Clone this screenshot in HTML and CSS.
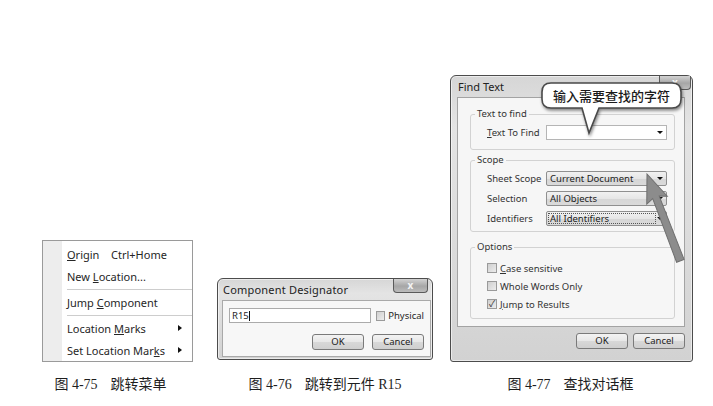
FILE: index.html
```html
<!DOCTYPE html>
<html lang="zh-CN">
<head>
    <meta charset="UTF-8">
    <title>跳转与查找</title>
    <link rel="stylesheet" href="styles.css">
</head>
<body>
    <div class="figures">
        <!-- 图 4-75 -->
        <div class="figure fig-menu">
            <div class="menu">
                <div class="menu-item"><span class="menu-label"><u>O</u>rigin</span><span>Ctrl+Home</span></div>
                <div class="menu-item"><span>New <u>L</u>ocation...</span></div>
                <div class="menu-sep"></div>
                <div class="menu-item"><span>Jump <u>C</u>omponent</span></div>
                <div class="menu-sep"></div>
                <div class="menu-item"><span>Location <u>M</u>arks</span><span class="sub-arrow"></span></div>
                <div class="menu-item"><span>Set Location Mar<u>k</u>s</span><span class="sub-arrow"></span></div>
            </div>
            <p class="caption">图 4-75<span class="gap"></span>跳转菜单</p>
        </div>

        <!-- 图 4-76 -->
        <div class="figure fig-jump">
            <div class="window win-small">
                <div class="titlebar">
                    <span class="title">Component Designator</span>
                    <span class="close-btn">x</span>
                </div>
                <div class="client">
                    <div class="designator-row">
                        <div class="textbox">R15<span class="caret"></span></div>
                        <span class="checkbox"></span>
                        <span class="check-label">Physical</span>
                    </div>
                    <div class="buttons">
                        <span class="btn">OK</span>
                        <span class="btn">Cancel</span>
                    </div>
                </div>
            </div>
            <p class="caption">图 4-76<span class="gap"></span>跳转到元件 R15</p>
        </div>

        <!-- 图 4-77 -->
        <div class="figure fig-find">
            <div class="window win-find">
                <div class="titlebar">
                    <span class="title">Find Text</span>
                    <span class="close-btn">x</span>
                </div>
                <div class="frame">
                    <fieldset class="group group-text">
                        <legend>Text to find</legend>
                        <div class="field-row">
                            <span class="field-label"><u>T</u>ext To Find</span>
                            <span class="combo combo-edit"><span class="drop"></span></span>
                        </div>
                    </fieldset>
                    <fieldset class="group group-scope">
                        <legend>Scope</legend>
                        <div class="field-row">
                            <span class="field-label">Sheet Scope</span>
                            <span class="combo">Current Document<span class="drop"></span></span>
                        </div>
                        <div class="field-row">
                            <span class="field-label">Selection</span>
                            <span class="combo">All Objects<span class="drop"></span></span>
                        </div>
                        <div class="field-row">
                            <span class="field-label">Identifiers</span>
                            <span class="combo combo-focus"><span class="focus-text">All Identifiers</span><span class="drop"></span></span>
                        </div>
                    </fieldset>
                    <fieldset class="group group-options">
                        <legend>Options</legend>
                        <div class="option-row"><span class="checkbox"></span><span><u>C</u>ase sensitive</span></div>
                        <div class="option-row"><span class="checkbox"></span><span>Whole Words Only</span></div>
                        <div class="option-row"><span class="checkbox checked">&#10003;</span><span><u>J</u>ump to Results</span></div>
                    </fieldset>
                </div>
                <div class="buttons">
                    <span class="btn">OK</span>
                    <span class="btn">Cancel</span>
                </div>
            </div>

            <!-- 标注气泡和箭头 -->
            <svg class="bubble-shape" width="150" height="70" viewBox="0 0 150 70">
                <path d="M12 4 H133 Q142 4 142 13 V20 Q142 29 133 29 H60 L50 54 L43 29 H12 Q3 29 3 20 V13 Q3 4 12 4 Z"
                      fill="#fff" stroke="#4a4a4a" stroke-width="1.6"/>
            </svg>
            <div class="bubble-text">输入需要查找的字符</div>
            <svg class="pointer-arrow" width="60" height="110" viewBox="0 0 60 110">
                <g transform="translate(14 8) rotate(-21)">
                    <polygon points="0,0 11,28 3.5,25 4,93 -4,93 -3.5,25 -11,28" fill="#8c8c8c" stroke="#6f6f6f" stroke-width="1"/>
                </g>
            </svg>
            <p class="caption">图 4-77<span class="gap"></span>查找对话框</p>
        </div>
    </div>
</body>
</html>
```

FILE: styles.css
```css
body {
    margin: 0;
    background-color: #fff;
    font-family: "Noto Sans", Arial, sans-serif;
    color: #262626;
}
.figures {
    display: flex;
    align-items: flex-end;
    padding: 75px 0 0 42px;
}
.figure {
    display: flex;
    flex-direction: column;
    align-items: center;
}
.fig-jump {
    margin-left: 24px;
}
.fig-find {
    margin-left: 17px;
    position: relative;
}
.caption {
    margin: 15px 0 0;
    font-family: "Liberation Serif", "Noto Sans CJK SC", serif;
    font-size: 14px;
    line-height: 16px;
    color: #1e1e1e;
    white-space: nowrap;
}
.fig-menu .caption {
    padding-right: 14px;
}
.fig-find .caption {
    padding-right: 2px;
}
.caption .gap {
    display: inline-block;
    width: 13px;
}

/* ---------- 跳转菜单 ---------- */
.menu {
    width: 149px;
    border: 1px solid #9a9a9a;
    padding: 2px 0 0;
    background: linear-gradient(to right, #ededed 0, #ededed 19px, #fff 19px);
    font-size: 11px;
}
.menu-item {
    display: flex;
    align-items: center;
    height: 22px;
    padding-left: 24px;
    white-space: pre;
}
.menu-label {
    width: 44px;
}
.menu-sep {
    height: 1px;
    margin: 2px 0 1px 24px;
    background-color: #cdcdcd;
}
.sub-arrow {
    margin-left: auto;
    margin-right: 10px;
    border-left: 4px solid #111;
    border-top: 3px solid transparent;
    border-bottom: 3px solid transparent;
}

/* ---------- 窗口 ---------- */
.window {
    box-sizing: border-box;
    border: 1px solid #4c4c4c;
    border-radius: 6px 6px 3px 3px;
    background: linear-gradient(180deg, #d6d6d6 0, #e4e4e4 18%, #dcdcdc 55%, #d2d2d2 100%);
    box-shadow: inset 0 0 0 1px rgba(255, 255, 255, 0.55);
}
.titlebar {
    display: flex;
    align-items: flex-start;
    height: 21px;
}
.title {
    font-size: 11px;
    line-height: 21px;
    color: #222;
}
.close-btn {
    margin-left: auto;
    height: 13px;
    border: 1px solid #5a5a5a;
    border-top: none;
    border-radius: 0 0 4px 4px;
    background: linear-gradient(180deg, #d2d2d2, #a6a6a6 55%, #bcbcbc);
    color: #f4f4f4;
    font-size: 10px;
    font-weight: bold;
    line-height: 12px;
    text-align: center;
}
.buttons {
    display: flex;
    justify-content: flex-end;
}
.btn {
    box-sizing: border-box;
    height: 16px;
    border: 1px solid #7a7a7a;
    border-radius: 3px;
    background: linear-gradient(180deg, #f3f3f3 0, #e7e7e7 50%, #d8d8d8 51%, #cfcfcf 100%);
    font-size: 9.5px;
    line-height: 14px;
    text-align: center;
    color: #222;
}
.checkbox {
    box-sizing: border-box;
    display: inline-block;
    width: 10px;
    height: 10px;
    border: 1px solid #9a9a9a;
    background: linear-gradient(135deg, #cfcfcf, #ececec);
    font-size: 9px;
    line-height: 8px;
    text-align: center;
    color: #333;
}

/* ---------- 跳转到元件 ---------- */
.win-small {
    width: 216px;
    height: 82px;
    margin-bottom: 2px;
    padding: 0 1px 1px 4px;
}
.win-small .title {
    padding-left: 1px;
    letter-spacing: 0.2px;
}
.win-small .close-btn {
    width: 33px;
    margin-right: 3px;
}
.client {
    border: 1px solid #a9a9a9;
    background-color: #f7f7f7;
    padding: 7px 6px 6px 6px;
}
.designator-row {
    display: flex;
    align-items: center;
}
.textbox {
    box-sizing: border-box;
    width: 149px;
    height: 15px;
    border: 1px solid #ababab;
    background-color: #fff;
    font-size: 9.5px;
    line-height: 13px;
    padding-left: 2px;
    display: flex;
    align-items: center;
}
.caret {
    width: 1px;
    height: 10px;
    background-color: #111;
}
.designator-row .checkbox {
    margin-left: 5px;
}
.check-label {
    margin-left: 3px;
    font-size: 9.5px;
}
.client .buttons {
    margin-top: 11px;
    gap: 8px;
}
.client .btn {
    width: 52px;
}

/* ---------- 查找对话框 ---------- */
.win-find {
    width: 243px;
    height: 287px;
    padding: 0 7px 0 6px;
}
.win-find .title {
    padding-left: 1px;
}
.win-find .close-btn {
    width: 30px;
    margin-right: -6px;
}
.frame {
    border: 1px solid #a3a3a3;
    background-color: #f6f6f6;
    padding: 10px 9px 7px 12px;
}
.group {
    margin: 0;
    border: 1px solid #d2d2d2;
    border-radius: 3px;
    padding: 5px 7px 9px 16px;
    font-size: 9.5px;
}
.group legend {
    margin-left: -12px;
    padding: 0 2px;
    line-height: 12px;
    color: #333;
}
.group-scope {
    margin-top: 4px;
    padding-bottom: 5px;
}
.group-options {
    margin-top: 9px;
    padding: 6px 7px 5px 16px;
}
.field-row {
    display: flex;
    align-items: center;
    height: 15px;
}
.field-row + .field-row {
    margin-top: 5px;
}
.field-label {
    width: 59px;
    color: #333;
}
.combo {
    box-sizing: border-box;
    display: flex;
    align-items: center;
    width: 121px;
    height: 15px;
    border: 1px solid #8f8f8f;
    border-radius: 2px;
    background: linear-gradient(180deg, #f1f1f1 0, #e6e6e6 50%, #d6d6d6 51%, #dadada 100%);
    padding-left: 3px;
    font-size: 9.5px;
    color: #222;
}
.combo-edit {
    background: #fff;
    border-color: #b5b5b5;
    border-radius: 0;
}
.combo-focus {
    padding-left: 1px;
}
.focus-text {
    box-sizing: border-box;
    width: 108px;
    height: 11px;
    line-height: 10px;
    padding-left: 1px;
    border: 1px dotted #555;
}
.drop {
    margin-left: auto;
    margin-right: 3px;
    border-top: 3px solid #111;
    border-left: 3px solid transparent;
    border-right: 3px solid transparent;
}
.option-row {
    display: flex;
    align-items: center;
    height: 18px;
    color: #333;
}
.option-row .checkbox {
    margin-right: 3px;
}
.win-find .buttons {
    margin-top: 6px;
    gap: 5px;
}
.win-find .btn {
    width: 52px;
}

/* 叠加在对话框上的标注 */
.bubble-shape {
    position: absolute;
    left: 89px;
    top: 4px;
    filter: drop-shadow(1px 2px 1.5px rgba(0, 0, 0, 0.45));
}
.bubble-text {
    position: absolute;
    left: 92px;
    top: 8px;
    width: 139px;
    height: 25px;
    font-family: "Noto Sans CJK SC", sans-serif;
    font-size: 13px;
    font-weight: 500;
    line-height: 25px;
    text-align: center;
    color: #1a1a1a;
}
.pointer-arrow {
    position: absolute;
    left: 183px;
    top: 91px;
}
```
